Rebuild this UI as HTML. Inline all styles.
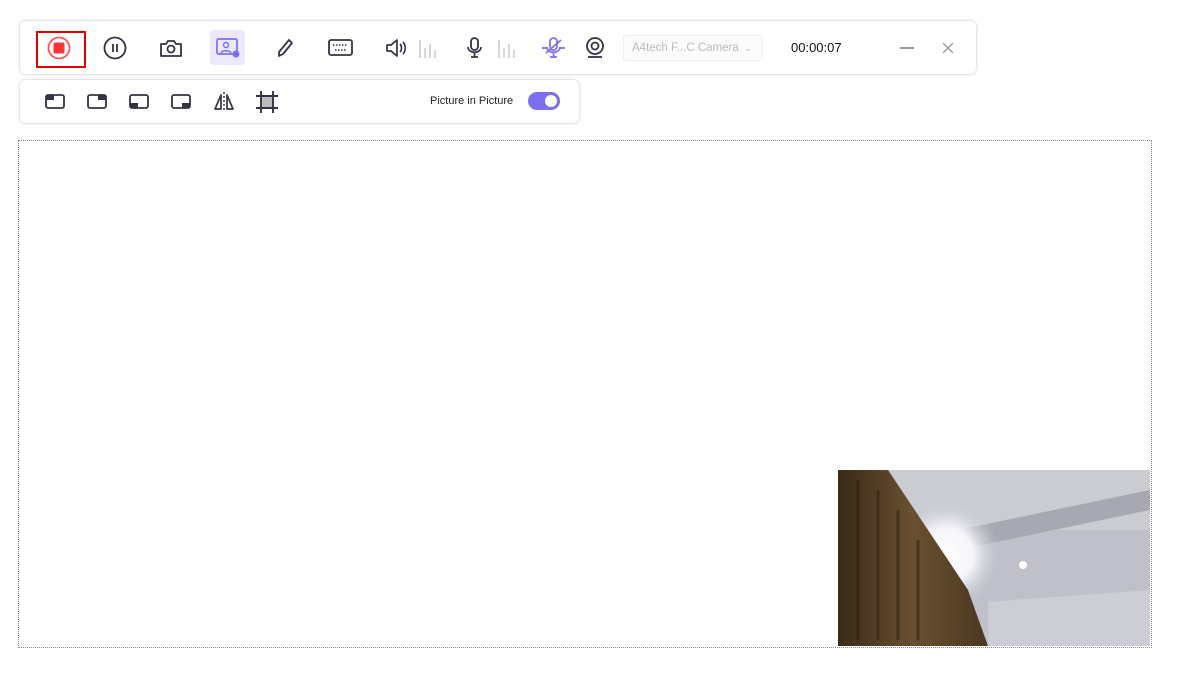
<!DOCTYPE html>
<html><head><meta charset="utf-8"><style>
body{margin:0;width:1188px;height:681px;background:#fff;font-family:"Liberation Sans",sans-serif;position:relative;overflow:hidden}
.bar{position:absolute;background:#fff;border-radius:6px;box-shadow:0 0 3px rgba(0,0,0,.25)}
svg.i{position:absolute}
</style></head><body>
<div class="bar" style="left:20px;top:21px;width:956px;height:53px"></div>
<div class="bar" style="left:20px;top:80px;width:559px;height:43px"></div>
<div style="position:absolute;left:18px;top:140px;width:1132px;height:506px;border:1px dotted #888"></div>

<div style="position:absolute;left:36px;top:31px;width:46px;height:33px;border:2px solid #e00000"></div>
<svg class="i" style="left:45px;top:35px" width="28" height="28"><circle cx="14" cy="13" r="10.5" fill="none" stroke="#f55" stroke-width="1.8"/><rect x="8.5" y="7.5" width="11" height="11" rx="2" fill="#f33"/></svg>
<svg class="i" style="left:102px;top:35px" width="26" height="26"><circle cx="13" cy="13" r="10.5" fill="none" stroke="#333344" stroke-width="1.8"/><path d="M11 9v8M15 9v8" stroke="#333344" stroke-width="1.8"/></svg>
<svg class="i" style="left:158px;top:35px" width="26" height="26"><path d="M3 9h5l2-3h6l2 3h5v12H3z" fill="none" stroke="#333344" stroke-width="1.8" stroke-linejoin="round"/><circle cx="13" cy="14" r="3.5" fill="none" stroke="#333344" stroke-width="1.8"/></svg>
<div style="position:absolute;left:210px;top:30px;width:35px;height:35px;background:#ece9fd;border-radius:4px"></div>
<svg class="i" style="left:214px;top:35px" width="28" height="26"><rect x="3" y="4" width="20" height="15" rx="1.5" fill="none" stroke="#7b6ff0" stroke-width="1.7"/><circle cx="12" cy="10" r="2.5" fill="none" stroke="#7b6ff0" stroke-width="1.5"/><path d="M7 18c1-3 9-3 10 0" fill="none" stroke="#7b6ff0" stroke-width="1.5"/><circle cx="22" cy="19" r="3.5" fill="#7b6ff0"/></svg>
<svg class="i" style="left:272px;top:35px" width="26" height="26"><path d="M17 5l3 3-9 11-4 2 0-4z" fill="none" stroke="#333344" stroke-width="1.8" stroke-linejoin="round"/></svg>
<svg class="i" style="left:327px;top:35px" width="28" height="26"><rect x="2" y="5" width="23" height="15" rx="2" fill="none" stroke="#333344" stroke-width="1.8"/><path d="M6 10h15M8 15h11" stroke="#333344" stroke-width="1.5" stroke-dasharray="1.5 1.5"/></svg>
<svg class="i" style="left:384px;top:35px" width="56" height="26"><path d="M3 10h4l6-5v16l-6-5H3z" fill="none" stroke="#333344" stroke-width="1.7" stroke-linejoin="round"/><path d="M16 9c2 2 2 6 0 8M19 7c3 3 3 9 0 12" fill="none" stroke="#333344" stroke-width="1.6"/><path d="M36 5v18M41 13v10M46 9v14M51 15v8" stroke="#ccc" stroke-width="1.6"/></svg>
<svg class="i" style="left:463px;top:35px" width="56" height="26"><rect x="8" y="3" width="7" height="12" rx="3.5" fill="none" stroke="#333344" stroke-width="1.8"/><path d="M5 12c0 7 13 7 13 0M11.5 18v4M8 22h7" fill="none" stroke="#333344" stroke-width="1.7"/><path d="M36 5v18M41 13v10M46 9v14M51 15v8" stroke="#ccc" stroke-width="1.6"/></svg>
<svg class="i" style="left:540px;top:35px" width="28" height="26"><rect x="10" y="3" width="7" height="12" rx="3.5" fill="none" stroke="#7b6ff0" stroke-width="1.7"/><path d="M7 12c0 7 13 7 13 0M13.5 18v4M10 22h7M2 13h6M19 13h6M6 18L21 5" fill="none" stroke="#7b6ff0" stroke-width="1.7"/></svg>
<svg class="i" style="left:583px;top:35px" width="26" height="26"><circle cx="12" cy="11" r="8" fill="none" stroke="#333344" stroke-width="1.8"/><circle cx="12" cy="11" r="3.5" fill="none" stroke="#333344" stroke-width="1.8"/><path d="M5 22h14" stroke="#333344" stroke-width="1.8"/></svg>
<div style="position:absolute;left:623px;top:35px;width:140px;height:26px;background:#fbfbfc;border:1px solid #f0f0f2;border-radius:3px;box-sizing:border-box;font-size:11.5px;color:#bbb;line-height:24px;padding-left:8px">A4tech F...C Camera<span style="position:absolute;right:10px;font-size:9px">&#8964;</span></div>
<div style="position:absolute;left:791px;top:40px;font-size:13px;color:#111">00:00:07</div>
<div style="position:absolute;left:900px;top:47px;width:14px;height:1.5px;background:#999"></div>
<svg class="i" style="left:941px;top:41px" width="14" height="14"><path d="M2 2l10 10M12 2L2 12" stroke="#999" stroke-width="1.4"/></svg>

<svg class="i" style="left:44px;top:91px" width="200" height="22">
<g fill="none" stroke="#333344" stroke-width="1.8"><rect x="2" y="4" width="18" height="13" rx="2"/><rect x="44" y="4" width="18" height="13" rx="2"/><rect x="86" y="4" width="18" height="13" rx="2"/><rect x="128" y="4" width="18" height="13" rx="2"/></g>
<rect x="2" y="4" width="8" height="5" fill="#333344"/><rect x="54" y="4" width="8" height="5" fill="#333344"/><rect x="86" y="12" width="8" height="5" fill="#333344"/><rect x="138" y="12" width="8" height="5" fill="#333344"/>
<path d="M180 1v20" stroke="#333344" stroke-width="1.5" stroke-dasharray="2 2"/><path d="M177 4l-6 14h6zM183 4l6 14h-6z" fill="none" stroke="#333344" stroke-width="1.7" stroke-linejoin="round"/>
</svg>
<svg class="i" style="left:255px;top:90px" width="24" height="24"><path d="M6 1v22M18 1v22M1 6h22M1 18h22" stroke="#333344" stroke-width="1.9"/><rect x="7" y="7" width="10" height="10" fill="#bbb"/></svg>
<div style="position:absolute;left:430px;top:95px;font-size:11px;color:#222">Picture in Picture</div>
<div style="position:absolute;left:528px;top:92px;width:32px;height:18px;border-radius:9px;background:#7b6ff0"><div style="position:absolute;right:3px;top:3px;width:12px;height:12px;border-radius:50%;background:#fff"></div></div>

<svg class="i" style="left:838px;top:470px" width="312" height="176">
<defs>
<linearGradient id="c" x1="0" y1="0" x2="1" y2="0"><stop offset="0" stop-color="#3a2a18"/><stop offset=".5" stop-color="#6a5030"/><stop offset="1" stop-color="#4a3820"/></linearGradient>
<radialGradient id="l" cx="0.5" cy="0.5" r="0.5"><stop offset="0" stop-color="#fff"/><stop offset=".5" stop-color="#f4f4fa"/><stop offset="1" stop-color="#c8c8d4" stop-opacity="0"/></radialGradient>
</defs>
<rect width="312" height="176" fill="#c0c0ca"/>
<rect x="0" y="0" width="312" height="60" fill="#cbcbd2"/>
<path d="M120 60L312 20v20L120 80z" fill="#a8a8b2"/>
<path d="M150 132L312 120v56H150z" fill="#cdcdd6"/>
<circle cx="108" cy="85" r="55" fill="url(#l)"/>
<circle cx="185" cy="95" r="4" fill="#fff"/>
<path d="M0 0h50l40 60 40 60 20 56H0z" fill="url(#c)"/>
<path d="M20 10v160M40 20v150M60 40v130M80 70v100" stroke="#2a1c10" stroke-width="3" opacity=".5"/>
</svg>
</body></html>
